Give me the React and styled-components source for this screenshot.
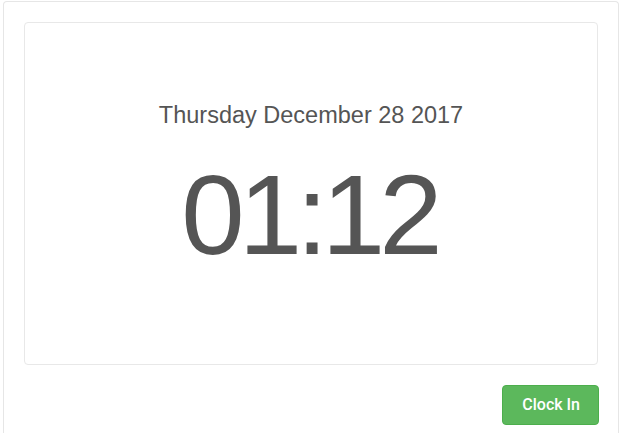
import React from 'react'
import styled, { createGlobalStyle } from 'styled-components';

const GlobalStyle = createGlobalStyle`
  body {
    margin: 1px 2px 0 3px;
    background: #fff;
    font-family: 'Liberation Sans', Arial, sans-serif;
    color: #555;
  }
`;

// Outer panel holding everything
const Panel = styled.div`
  border: 1px solid #e6e6e6;
  border-bottom: none;
  border-radius: 4px 4px 0 0;
  padding: 20px 20px 8px 20px;
  min-height: 424px;
  box-sizing: border-box;
`;

// The clock card
const ClockCard = styled.div`
  border: 1px solid #e8e8e8;
  border-radius: 4px;
  height: 343px;
  box-sizing: border-box;
  display: flex;
  flex-direction: column;
  align-items: center;
  padding-top: 78px;
`;

const DateLine = styled.div`
  font-size: 23.5px;
  line-height: 28px;
  color: #555;
`;

const Time = styled.div`
  font-size: 114px;
  line-height: 1;
  margin-top: 29px;
  color: #555;
  letter-spacing: -6px;
  margin-right: 4px;
`;

const Actions = styled.div`
  display: flex;
  justify-content: flex-end;
  margin-top: 20px;
  margin-right: -1px;
`;

const ClockButton = styled.button`
  background: #5cb85c;
  border: 1px solid #4cae4c;
  color: #fff;
  font-family: Roboto, 'Liberation Sans', Arial, sans-serif;
  font-weight: 500;
  font-size: 16px;
  line-height: 20px;
  padding: 9px 18px 9px 19px;
  border-radius: 4px;
  cursor: pointer;
`;

const App = () => {
  return (
    <>
      <GlobalStyle />
      <Panel>
        <ClockCard>
          <DateLine>Thursday December 28 2017</DateLine>
          <Time>01:12</Time>
        </ClockCard>
        <Actions>
          <ClockButton>Clock In</ClockButton>
        </Actions>
      </Panel>
    </>
  );
};

export default App;
